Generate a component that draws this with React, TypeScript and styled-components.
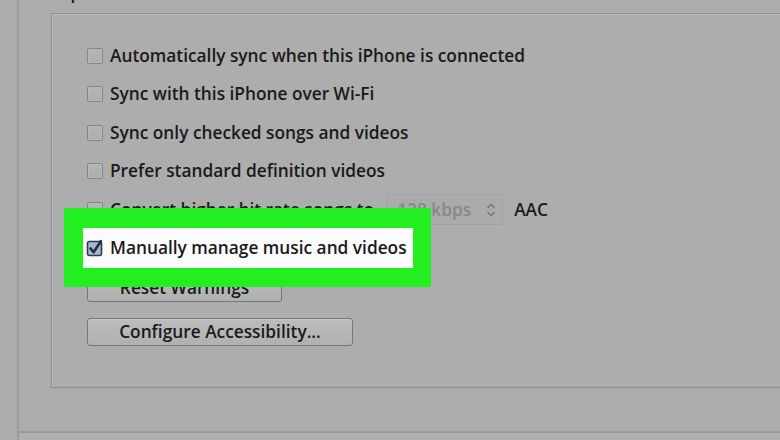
import React from "react";
import styled, { createGlobalStyle } from "styled-components";

const Global = createGlobalStyle`
  html, body { margin: 0; padding: 0; }
  body {
    width: 780px;
    height: 440px;
    overflow: hidden;
    background: #acacac;
    font-family: "Open Sans", "Noto Sans", "Liberation Sans", sans-serif;
    color: #1c1c1c;
  }
`;

const Page = styled.div`
  display: flex;
  width: 780px;
  height: 440px;
  overflow: hidden;
  background: #acacac;
`;

const SideStrip = styled.div`
  width: 17px;
  flex: none;
  border-right: 2px solid #9c9c9c;
`;

const Main = styled.div`
  flex: 1;
  display: flex;
  flex-direction: column;
  min-width: 0;
`;

const Content = styled.div`
  height: 431px;
  padding-left: 32px;
  display: flex;
  flex-direction: column;
  box-sizing: border-box;
`;

const Legend = styled.div`
  height: 20px;
  margin: -17px 0 10px 6px;
  font-size: 17px;
  line-height: 20px;
  font-weight: 600;
`;

const Panel = styled.section`
  height: 375px;
  box-sizing: border-box;
  margin-right: -10px;
  border: 1px solid #8e8e8e;
  border-right: none;
  box-shadow: inset 1px 1px 0 #bdbdbd;
  background: #adadad;
  padding: 32px 0 0 35px;
  display: flex;
  flex-direction: column;
`;

const Options = styled.div`
  display: flex;
  flex-direction: column;
  gap: 18.4px;
`;

const Row = styled.label`
  display: flex;
  align-items: center;
  height: 20px;
  gap: 7px;
  font-size: 17.3px;
  line-height: 20px;
  font-weight: 600;
  white-space: nowrap;
  color: #1a1a1a;
`;

const Box = styled.span`
  width: 14px;
  height: 14px;
  flex: none;
  border: 1px solid #858585;
  border-radius: 2px;
  background: linear-gradient(#b5b5b5, #adadad);
  box-shadow: inset 0 0 0 1px #b9b9b9;
`;

const Highlight = styled.div`
  position: relative;
  z-index: 2;
  align-self: flex-start;
  margin: -30px 0 -29px -23px;
  padding: 20px 18px 19px 19px;
  background: #22ee22;
`;

const WhiteCard = styled.div`
  display: flex;
  align-items: center;
  height: 40px;
  box-sizing: border-box;
  padding: 0 6px 0 4px;
  background: #fbfbfb;
`;

const Combo = styled.div`
  display: flex;
  align-items: center;
  justify-content: space-between;
  width: 117px;
  height: 31px;
  box-sizing: border-box;
  margin: -6px 0 -6px 5px;
  padding: 0 6px 0 10px;
  border: 1px solid #a2a2a2;
  border-radius: 2px;
  background: #ababab;
  color: #888;
  font-weight: 600;
`;

const Suffix = styled.span`
  margin-left: 4px;
`;

const Buttons = styled.div`
  display: flex;
  flex-direction: column;
  align-items: flex-start;
  gap: 16px;
  margin-top: 16px;
`;

const Button = styled.button<{ $w: number }>`
  width: ${(p) => p.$w}px;
  height: 28px;
  box-sizing: border-box;
  border: 1px solid #777;
  border-radius: 3px;
  background: linear-gradient(#bcbcbc, #b1b1b1);
  box-shadow: inset 0 1px 0 #c8c8c8;
  font-family: inherit;
  font-size: 17.3px;
  font-weight: 600;
  color: #1a1a1a;
  padding: 0;
  line-height: 20px;
`;

const Footer = styled.div`
  border-top: 2px solid #9a9a9a;
  flex: 1;
  background: #b0b0b0;
`;

const CheckedBox = () => (
  <svg width="18" height="18" viewBox="0 0 18 18" style={{ flex: "none", marginLeft: -1, marginRight: -1 }}>
    <rect x="1.5" y="2.5" width="14" height="14" rx="2" fill="#a9b7ca" stroke="#2b3b55" strokeWidth="1.6" />
    <path d="M4.5 9.5 L7.6 13.2 L14.8 2.2" fill="none" stroke="#1d2f4d" strokeWidth="2.6" strokeLinecap="round" strokeLinejoin="round" />
  </svg>
);

const Chevrons = () => (
  <svg width="10" height="16" viewBox="0 0 10 16">
    <path d="M1.5 6 L5 2.5 L8.5 6 M1.5 10 L5 13.5 L8.5 10" fill="none" stroke="#7c7c7c" strokeWidth="1.6" />
  </svg>
);

const items = [
  "Automatically sync when this iPhone is connected",
  "Sync with this iPhone over Wi-Fi",
  "Sync only checked songs and videos",
  "Prefer standard definition videos",
];

export default function App() {
  return (
    <>
      <Global />
      <Page>
        <SideStrip />
        <Main>
          <Content>
            <Legend>Options</Legend>
            <Panel>
              <Options>
                {items.map((t) => (
                  <Row key={t}>
                    <Box />
                    {t}
                  </Row>
                ))}
                <Row>
                  <Box />
                  Convert higher bit rate songs to
                  <Combo>
                    128 kbps
                    <Chevrons />
                  </Combo>
                  <Suffix>AAC</Suffix>
                </Row>
                <Highlight>
                  <WhiteCard>
                    <Row>
                      <CheckedBox />
                      Manually manage music and videos
                    </Row>
                  </WhiteCard>
                </Highlight>
              </Options>
              <Buttons>
                <Button $w={195}>Reset Warnings</Button>
                <Button $w={266}>Configure Accessibility...</Button>
              </Buttons>
            </Panel>
          </Content>
          <Footer />
        </Main>
      </Page>
    </>
  );
}
